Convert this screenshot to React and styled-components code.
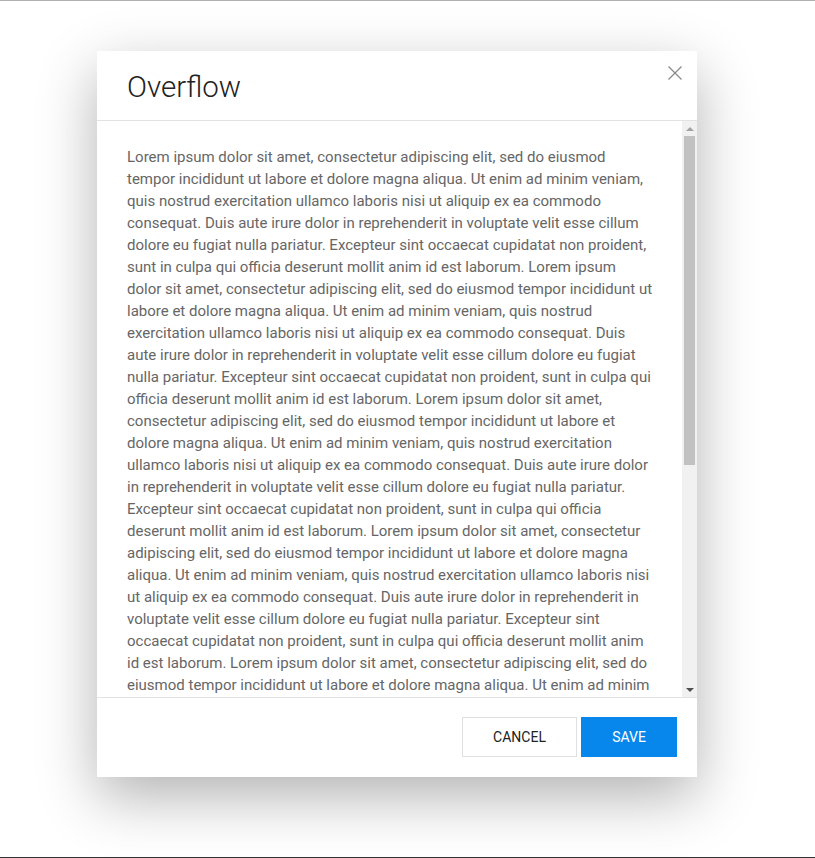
import React from 'react';
import styled, { createGlobalStyle } from 'styled-components';

const GlobalStyle = createGlobalStyle`
  html, body {
    margin: 0;
    padding: 0;
    background: #fff;
  }
  body {
    font-family: Roboto, 'Liberation Sans', sans-serif;
  }
`;

const Page = styled.div`
  box-sizing: border-box;
  height: 858px;
  border-top: 1px solid #b0b0b0;
  border-bottom: 1px solid #333;
  padding: 50px 0 0 97px;
  overflow: hidden;
`;

const Dialog = styled.div`
  width: 600px;
  height: 726px;
  background: #fff;
  display: flex;
  flex-direction: column;
  box-shadow: 0 20px 55px rgba(0, 0, 0, 0.3);
  position: relative;
`;

const Header = styled.div`
  height: 70px;
  box-sizing: border-box;
  flex: none;
  display: flex;
  align-items: center;
  padding: 2px 30px 0;
  border-bottom: 1px solid #e2e2e2;
`;

const Title = styled.h2`
  margin: 0;
  font-family: Roboto, sans-serif;
  font-weight: 300;
  font-size: 29.5px;
  color: #222;
`;

const Close = styled.button`
  position: absolute;
  top: 14px;
  right: 14px;
  width: 16px;
  height: 16px;
  padding: 0;
  border: 0;
  background: none;
  cursor: pointer;
  display: flex;
`;

const Body = styled.div`
  flex: 1;
  min-height: 0;
  display: flex;
`;

const Content = styled.div`
  flex: 1;
  overflow: hidden;
  padding: 25px 29px 25px 30px;
  color: #666;
  font-size: 15px;
  line-height: 22px;
`;

const Para = styled.p`
  margin: 0;
`;

const ScrollBar = styled.div`
  width: 15px;
  flex: none;
  background: #f1f1f1;
  display: flex;
  flex-direction: column;
`;

const Arrow = styled.div`
  height: 15px;
  flex: none;
  display: flex;
  align-items: center;
  justify-content: center;

  &::before {
    content: '';
    width: 0;
    height: 0;
    border-left: 4px solid transparent;
    border-right: 4px solid transparent;
    ${p =>
      p.$down
        ? 'border-top: 4px solid #505050;'
        : 'border-bottom: 4px solid #a3a3a3;'}
  }
`;

const Track = styled.div`
  flex: 1;
  padding: 0 2px;
`;

const Thumb = styled.div`
  height: 329px;
  background: #c1c1c1;
`;

const Footer = styled.div`
  height: 80px;
  flex: none;
  box-sizing: border-box;
  border-top: 1px solid #e2e2e2;
  display: flex;
  justify-content: flex-end;
  align-items: flex-start;
  gap: 4px;
  padding: 19px 20px 0 0;
`;

const Button = styled.button`
  height: 40px;
  width: ${p => p.$w}px;
  box-sizing: border-box;
  font-family: Roboto, sans-serif;
  font-size: 14px;
  text-transform: uppercase;
  border: 1px solid ${p => (p.$primary ? '#0787eb' : '#e0e0e0')};
  background: ${p => (p.$primary ? '#0787eb' : '#fff')};
  color: ${p => (p.$primary ? '#fff' : '#222')};
  cursor: pointer;
`;

const lorem =
  'Lorem ipsum dolor sit amet, consectetur adipiscing elit, sed do eiusmod tempor incididunt ut labore et dolore magna aliqua. Ut enim ad minim veniam, quis nostrud exercitation ullamco laboris nisi ut aliquip ex ea commodo consequat. Duis aute irure dolor in reprehenderit in voluptate velit esse cillum dolore eu fugiat nulla pariatur. Excepteur sint occaecat cupidatat non proident, sunt in culpa qui officia deserunt mollit anim id est laborum.';

export default function App() {
  const text = Array(7).fill(lorem).join(' ');
  return (
    <Page>
      <GlobalStyle />
      <Dialog>
        <Header>
          <Title>Overflow</Title>
        </Header>
        <Close aria-label="Close">
          <svg width="16" height="16" viewBox="0 0 16 16">
            <path d="M1.5 1.5 L14.5 14.5 M14.5 1.5 L1.5 14.5" stroke="#8a8a8a" strokeWidth="1.3" fill="none" />
          </svg>
        </Close>
        <Body>
          <Content>
            <Para>{text}</Para>
          </Content>
          <ScrollBar>
            <Arrow />
            <Track>
              <Thumb />
            </Track>
            <Arrow $down />
          </ScrollBar>
        </Body>
        <Footer>
          <Button $w={115}>Cancel</Button>
          <Button $w={96} $primary>Save</Button>
        </Footer>
      </Dialog>
    </Page>
  );
}
